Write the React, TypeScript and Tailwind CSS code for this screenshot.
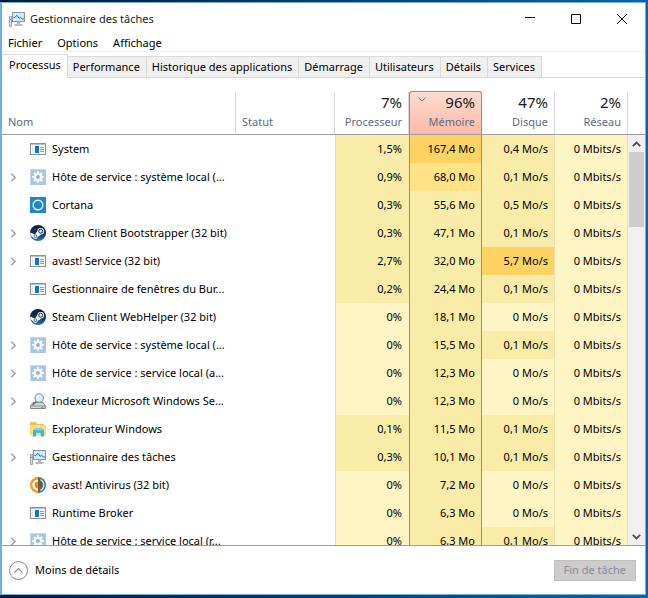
import React from 'react';

type Heat = 'low' | 'mid' | 'warm' | 'hot';
type IconName = 'app' | 'gear' | 'cortana' | 'steam' | 'indexer' | 'folder' | 'monitor' | 'avast';

interface Process {
  name: string;
  icon: IconName;
  expandable?: boolean;
  cpu: string;
  memory: string;
  disk: string;
  cpuHeat: Heat;
  memoryHeat: Heat;
  diskHeat: Heat;
}

const heatClass: Record<Heat, string> = {
  low: 'bg-[#fff4c4]',
  mid: 'bg-[#f9eca8]',
  warm: 'bg-[#ffe386]',
  hot: 'bg-[#ffd264]',
};

const menus = ['Fichier', 'Options', 'Affichage'];

const tabs = [
  'Performance',
  'Historique des applications',
  'Démarrage',
  'Utilisateurs',
  'Détails',
  'Services',
];

const processes: Process[] = [
  { name: 'System', icon: 'app', cpu: '1,5%', memory: '167,4 Mo', disk: '0,4 Mo/s', cpuHeat: 'mid', memoryHeat: 'hot', diskHeat: 'mid' },
  { name: 'Hôte de service : système local (...', icon: 'gear', expandable: true, cpu: '0,9%', memory: '68,0 Mo', disk: '0,1 Mo/s', cpuHeat: 'mid', memoryHeat: 'warm', diskHeat: 'mid' },
  { name: 'Cortana', icon: 'cortana', cpu: '0,3%', memory: '55,6 Mo', disk: '0,5 Mo/s', cpuHeat: 'mid', memoryHeat: 'mid', diskHeat: 'mid' },
  { name: 'Steam Client Bootstrapper (32 bit)', icon: 'steam', expandable: true, cpu: '0,3%', memory: '47,1 Mo', disk: '0,1 Mo/s', cpuHeat: 'mid', memoryHeat: 'mid', diskHeat: 'mid' },
  { name: 'avast! Service (32 bit)', icon: 'app', expandable: true, cpu: '2,7%', memory: '32,0 Mo', disk: '5,7 Mo/s', cpuHeat: 'mid', memoryHeat: 'mid', diskHeat: 'hot' },
  { name: 'Gestionnaire de fenêtres du Bur...', icon: 'app', cpu: '0,2%', memory: '24,4 Mo', disk: '0,1 Mo/s', cpuHeat: 'mid', memoryHeat: 'mid', diskHeat: 'mid' },
  { name: 'Steam Client WebHelper (32 bit)', icon: 'steam', cpu: '0%', memory: '18,1 Mo', disk: '0 Mo/s', cpuHeat: 'low', memoryHeat: 'mid', diskHeat: 'low' },
  { name: 'Hôte de service : système local (...', icon: 'gear', expandable: true, cpu: '0%', memory: '15,5 Mo', disk: '0,1 Mo/s', cpuHeat: 'low', memoryHeat: 'mid', diskHeat: 'mid' },
  { name: 'Hôte de service : service local (a...', icon: 'gear', expandable: true, cpu: '0%', memory: '12,3 Mo', disk: '0 Mo/s', cpuHeat: 'low', memoryHeat: 'mid', diskHeat: 'low' },
  { name: 'Indexeur Microsoft Windows Se...', icon: 'indexer', expandable: true, cpu: '0%', memory: '12,3 Mo', disk: '0 Mo/s', cpuHeat: 'low', memoryHeat: 'mid', diskHeat: 'low' },
  { name: 'Explorateur Windows', icon: 'folder', cpu: '0,1%', memory: '11,5 Mo', disk: '0,1 Mo/s', cpuHeat: 'mid', memoryHeat: 'mid', diskHeat: 'mid' },
  { name: 'Gestionnaire des tâches', icon: 'monitor', expandable: true, cpu: '0,3%', memory: '10,1 Mo', disk: '0,1 Mo/s', cpuHeat: 'mid', memoryHeat: 'mid', diskHeat: 'mid' },
  { name: 'avast! Antivirus (32 bit)', icon: 'avast', cpu: '0%', memory: '7,2 Mo', disk: '0 Mo/s', cpuHeat: 'low', memoryHeat: 'mid', diskHeat: 'low' },
  { name: 'Runtime Broker', icon: 'app', cpu: '0%', memory: '6,3 Mo', disk: '0 Mo/s', cpuHeat: 'low', memoryHeat: 'mid', diskHeat: 'low' },
  { name: 'Hôte de service : service local (r...', icon: 'gear', expandable: true, cpu: '0%', memory: '6,3 Mo', disk: '0,1 Mo/s', cpuHeat: 'low', memoryHeat: 'mid', diskHeat: 'mid' },
];

const ProcessIcon: React.FC<{ name: IconName }> = ({ name }) => {
  const svgProps = { width: 16, height: 16, viewBox: '0 0 16 16', 'aria-hidden': true, className: 'shrink-0' };

  switch (name) {
    case 'app':
      return (
        <svg {...svgProps}>
          <rect x="0.5" y="2.5" width="15" height="11" fill="#f7f9fa" stroke="#87939a" />
          <path d="M1 3.5h14" stroke="#b9c3c8" />
          <rect x="5" y="5" width="4" height="7" fill="#1273cc" />
          <path d="M10 6.5h4M10 10.5h4" stroke="#e08a4a" />
          <path d="M10 8.5h4" stroke="#7d94a6" />
          <path d="M2.5 5v7" stroke="#dce8ee" />
        </svg>
      );
    case 'gear':
      return (
        <svg {...svgProps}>
          <rect width="16" height="16" fill="#a9c6e4" />
          <path d="M0.5 15.5v-15h15" fill="none" stroke="#c6d9ec" />
          <path d="M8 2.2v11.6M2.2 8h11.6M3.9 3.9l8.2 8.2M12.1 3.9l-8.2 8.2" stroke="#fff" strokeWidth="2" />
          <circle cx="8" cy="8" r="4.2" fill="#f6fafd" />
          <circle cx="8" cy="8" r="1.9" fill="#8fb3d9" />
        </svg>
      );
    case 'cortana':
      return (
        <svg {...svgProps}>
          <rect width="16" height="16" fill="#1f86cc" />
          <circle cx="8" cy="8" r="4.8" fill="none" stroke="#e9f6ff" strokeWidth="1.5" />
        </svg>
      );
    case 'steam':
      return (
        <svg {...svgProps}>
          <defs>
            <linearGradient id="steam" x1="0" y1="0" x2="0" y2="1">
              <stop offset="0" stopColor="#101c3c" />
              <stop offset="0.55" stopColor="#12305e" />
              <stop offset="1" stopColor="#2a7cb4" />
            </linearGradient>
          </defs>
          <circle cx="8" cy="8" r="8" fill="url(#steam)" />
          <path d="M0 7.4l5 2.1 2.4-3.4 3.6 3.6-3.4 2.2a2.4 2.4 0 0 1-4.6 0.4L0.6 10.6z" fill="#fff" />
          <circle cx="10.7" cy="6.2" r="3.3" fill="#fff" />
          <circle cx="10.7" cy="6.2" r="2" fill="#dfe6ed" stroke="#172a4d" strokeWidth="1" />
          <circle cx="5.4" cy="11.2" r="1.4" fill="none" stroke="#1c4674" strokeWidth="0.8" />
        </svg>
      );
    case 'indexer':
      return (
        <svg {...svgProps}>
          <path d="M3 9.5h10l2.5 3.5v2.5H0.5V13z" fill="#d3d6d9" stroke="#777d83" strokeWidth="0.9" />
          <path d="M1 13h14" stroke="#8a8f94" />
          <path d="M11.5 14.3h2" stroke="#3f9c52" />
          <path d="M6.6 8.2L2.6 12" stroke="#74797f" strokeWidth="1.8" />
          <circle cx="9.2" cy="5" r="4.2" fill="#dcecf8" stroke="#8a9299" strokeWidth="1.1" />
          <path d="M6.8 4.6a2.6 2.6 0 0 1 2.6-2" fill="none" stroke="#fff" />
        </svg>
      );
    case 'folder':
      return (
        <svg {...svgProps}>
          <path d="M0 1h6l1.5 2H14v3H0z" fill="#ebc356" />
          <path d="M0 4h14.5l1.5 1v9.5H0z" fill="#fbdc7a" />
          <path d="M3 15.5V9.2L5 7.5h7l2 1.7v6.3h-3.2v-3.7H6.2v3.7z" fill="#35b4e6" />
          <path d="M5 7.5h7l2 1.7H3z" fill="#7fd3f2" />
        </svg>
      );
    case 'monitor':
      return (
        <svg {...svgProps}>
          <path d="M0.5 5.5h2v10h-2z" fill="#d9dde0" stroke="#8d9499" strokeWidth="0.8" />
          <path d="M1 8.5h1.5" stroke="#5da45c" />
          <rect x="3.5" y="1.5" width="12" height="9" fill="#cfecf8" stroke="#9097a0" />
          <path d="M4.5 6.5h1.5l1.8-2.3 2.4 3.2 1.3-1.2 1.8 1.8h1.7" fill="none" stroke="#1f7199" strokeWidth="1" />
          <path d="M8 11h3v2h2.5v2h-8v-2H8z" fill="#b4babf" />
        </svg>
      );
    case 'avast':
      return (
        <svg {...svgProps}>
          <path d="M8 0a8 8 0 0 1 0 16z" fill="#23809b" />
          <path d="M8 0a8 8 0 0 0 0 16z" fill="#f59a1f" />
          <path d="M8 2.4a5.6 5.6 0 0 0 0 11.2z" fill="#fff" />
          <path d="M8 4.6a3.4 3.4 0 0 0 0 6.8z" fill="#f08a1c" />
          <path d="M8 0.4c3 1.2 4.2 4 4.2 7.6S11 14.4 8 15.6z" fill="#7d5a34" />
          <path d="M10.4 2.6a6 6 0 0 1 0 10.8" fill="none" stroke="#e6eff0" strokeWidth="1.2" />
        </svg>
      );
  }
};

const TitleBar: React.FC = () => (
  <header className="flex h-8 shrink-0 items-center pl-[7px]">
    <ProcessIcon name="monitor" />
    <h1 className="grow pl-[5px] text-[#222]">Gestionnaire des tâches</h1>
    <button type="button" aria-label="Réduire" className="flex h-7 w-[46px] items-center justify-center">
      <svg width="10" height="10" viewBox="0 0 10 10"><path d="M0 3.5h10" stroke="#000" /></svg>
    </button>
    <button type="button" aria-label="Agrandir" className="flex h-7 w-[46px] items-center justify-center">
      <svg width="10" height="10" viewBox="0 0 10 10"><path d="M0.5 0.5h9v9h-9z" fill="none" stroke="#000" /></svg>
    </button>
    <button type="button" aria-label="Fermer" className="flex h-7 w-[46px] items-center justify-center">
      <svg width="10" height="10" viewBox="0 0 10 10"><path d="M0 0l10 10M10 0L0 10" stroke="#000" /></svg>
    </button>
  </header>
);

interface MetricHeaderProps {
  value: string;
  label: string;
  sorted?: boolean;
}

const MetricHeader: React.FC<MetricHeaderProps> = ({ value, label, sorted = false }) => (
  <th
    scope="col"
    aria-sort={sorted ? 'descending' : undefined}
    className="h-11 border-b border-b-[#9c9ca4] p-0 text-right align-bottom font-normal"
  >
    <div
      className={
        sorted
          ? 'relative h-[43px] rounded-t-[3px] border border-b-0 border-[#f26a45] bg-linear-to-b from-[#fddcd2] to-[#fdb9a6] pr-[6px]'
          : 'h-[42px] border-r border-r-[#d6d9de] pr-[6px]'
      }
    >
      {sorted && (
        <svg className="absolute top-[5px] left-2" width="8" height="5" viewBox="0 0 8 5" aria-hidden>
          <path d="M0.5 0.5L4 4l3.5-3.5" fill="none" stroke="#8a6a64" />
        </svg>
      )}
      <div className="text-[15px] leading-5 text-[#1a1a1a]">{value}</div>
      <div className="leading-5 text-[#5c6b84]">{label}</div>
    </div>
  </th>
);

const ProcessRow: React.FC<{ process: Process }> = ({ process }) => (
  <tr className="h-7">
    <td className="p-0">
      <div className="flex items-center pl-2">
        <span className="flex w-5 shrink-0">
          {process.expandable && (
            <button type="button" aria-label={`Développer ${process.name}`} className="flex">
              <svg width="7" height="9" viewBox="0 0 7 9"><path d="M1.2 0.7L5.2 4.5l-4 3.8" fill="none" stroke="#a2a2a2" strokeWidth="1.5" /></svg>
            </button>
          )}
        </span>
        <ProcessIcon name={process.icon} />
        <span className="pl-[6px] whitespace-nowrap">{process.name}</span>
      </div>
    </td>
    <td className="p-0" />
    <td className={`border-l border-l-[#ebe0a6] p-0 pr-[7px] text-right ${heatClass[process.cpuHeat]}`}>{process.cpu}</td>
    <td className={`border-x border-x-[#f26a45] p-0 pr-[6px] text-right ${heatClass[process.memoryHeat]}`}>{process.memory}</td>
    <td className={`border-r border-r-[#ebe0b0] p-0 pr-[6px] text-right ${heatClass[process.diskHeat]}`}>{process.disk}</td>
    <td className="border-r border-r-[#ebe0b0] bg-[#fff4c4] p-0 pr-[6px] text-right">0 Mbits/s</td>
  </tr>
);

const Scrollbar: React.FC = () => (
  <div className="flex w-[17px] shrink-0 flex-col">
    <div className="h-11 shrink-0 border-b border-[#9c9ca4]" />
    <div className="flex min-h-0 grow flex-col bg-[#f0f0f0]">
      <button type="button" aria-label="Défiler vers le haut" className="flex h-[17px] shrink-0 items-center justify-center">
        <svg width="9" height="6" viewBox="0 0 9 6"><path d="M0.8 5.2L4.5 1.5l3.7 3.7" fill="none" stroke="#505050" strokeWidth="1.8" /></svg>
      </button>
      <div className="min-h-0 grow px-px">
        <div className="h-1/5 bg-[#cdcdcd]" />
      </div>
      <button type="button" aria-label="Défiler vers le bas" className="flex h-[17px] shrink-0 items-center justify-center">
        <svg width="9" height="6" viewBox="0 0 9 6"><path d="M0.8 0.8L4.5 4.5l3.7-3.7" fill="none" stroke="#505050" strokeWidth="1.8" /></svg>
      </button>
    </div>
  </div>
);

export default function App() {
  return (
    <div className="h-screen bg-linear-to-r from-[#06182f] to-[#0a62ae] pt-[2px] pr-[2px] pb-[3px] font-['Noto_Sans','Open_Sans',sans-serif] text-[11px] leading-4 text-black">
      <div className="flex h-full flex-col border border-l-2 border-[#6fb1de] bg-white">
        <TitleBar />

        <nav className="flex h-[17px] shrink-0 items-center gap-[15px] border-b border-[#f0f0f0] pl-[6px]">
          {menus.map((menu) => (
            <button key={menu} type="button">{menu}</button>
          ))}
        </nav>

        <div role="tablist" className="flex h-[26px] shrink-0 items-end border-b border-[#d9d9d9]">
          <button type="button" role="tab" aria-selected className="-mb-px h-6 border-t border-r border-[#d9d9d9] bg-white pr-[6px] pb-[3px] pl-[7px]">
            Processus
          </button>
          {tabs.map((tab) => (
            <button key={tab} type="button" role="tab" aria-selected={false} className="h-[21px] border-t border-r border-[#d9d9d9] bg-[#f0f0f0] pr-[6px] pl-[5px]">
              {tab}
            </button>
          ))}
        </div>

        <main className="flex min-h-0 grow pt-[13px]">
          <div className="min-w-0 grow overflow-hidden">
            <table className="w-full table-fixed border-separate border-spacing-0">
              <colgroup>
                <col />
                <col className="w-[99px]" />
                <col className="w-[74px]" />
                <col className="w-[73px]" />
                <col className="w-[73px]" />
                <col className="w-[73px]" />
              </colgroup>
              <thead>
                <tr>
                  <th scope="col" className="h-11 border-b border-[#9c9ca4] p-0 text-left align-bottom font-normal text-[#5c6b84]">
                    <div className="flex h-[42px] items-end border-r border-[#d6d9de] pb-1 pl-[6px]">Nom</div>
                  </th>
                  <th scope="col" className="h-11 border-b border-[#9c9ca4] p-0 text-left align-bottom font-normal text-[#5c6b84]">
                    <div className="flex h-[42px] items-end border-r border-[#d6d9de] pb-1 pl-[6px]">Statut</div>
                  </th>
                  <MetricHeader value="7%" label="Processeur" />
                  <MetricHeader value="96%" label="Mémoire" sorted />
                  <MetricHeader value="47%" label="Disque" />
                  <MetricHeader value="2%" label="Réseau" />
                </tr>
              </thead>
              <tbody>
                {processes.map((process, index) => (
                  <ProcessRow key={index} process={process} />
                ))}
              </tbody>
            </table>
          </div>
          <Scrollbar />
        </main>

        <footer className="flex h-[49px] shrink-0 items-center justify-between border-t border-[#9c9ca4] pr-[9px] pl-[7px]">
          <button type="button" className="flex items-center gap-[7px]">
            <svg width="19" height="19" viewBox="0 0 19 19" aria-hidden>
              <circle cx="9.5" cy="9.5" r="9" fill="none" stroke="#8a8a8a" />
              <path d="M5.5 11.5l4-4 4 4" fill="none" stroke="#8a8a8a" strokeWidth="1.2" />
            </svg>
            Moins de détails
          </button>
          <button type="button" disabled className="h-[21px] border border-[#bfbfbf] bg-[#cccccc] px-[9px] text-[#8a8a9a]">
            Fin de tâche
          </button>
        </footer>
      </div>
    </div>
  );
}
